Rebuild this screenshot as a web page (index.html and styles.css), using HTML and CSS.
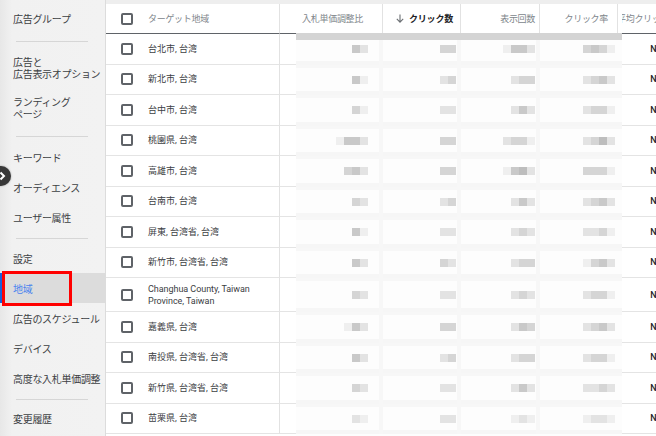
FILE: index.html
```html
<!DOCTYPE html>
<html lang="ja">
<head>
<meta charset="utf-8">
<title>地域</title>
<link rel="stylesheet" href="styles.css">
</head>
<body>
<div class="app">
  <nav class="sidebar">
    <div class="nav-item">広告グループ</div>
    <hr class="nav-div d1">
    <div class="nav-item two"><span class="ln">広告と</span><span class="ln">広告表示オプション</span></div>
    <div class="nav-item two"><span class="ln">ランディング</span><span class="ln">ページ</span></div>
    <hr class="nav-div d2">
    <div class="nav-item">キーワード</div>
    <div class="nav-item">オーディエンス</div>
    <div class="nav-item">ユーザー属性</div>
    <hr class="nav-div d3">
    <div class="nav-item">設定</div>
    <div class="nav-item active">地域</div>
    <div class="nav-item">広告のスケジュール</div>
    <div class="nav-item">デバイス</div>
    <div class="nav-item">高度な入札単価調整</div>
    <hr class="nav-div d4">
    <div class="nav-item">変更履歴</div>
    <div class="highlight"></div>
  </nav>

  <main class="content">
    <div class="top-strip"></div>
    <div class="table">
      <div class="row head">
        <div class="cell name"><span class="cb"></span><span class="h-label">ターゲット地域</span></div>
        <div class="cell num h-bid"><span class="h-label">入札単価調整比</span></div>
        <div class="cell num h-clicks"><svg class="sort" width="8" height="9" viewBox="0 0 8 9"><path d="M4 0.5V8M0.8 4.9L4 8.1 7.2 4.9" fill="none" stroke="#6b6f73" stroke-width="1.1"/></svg><span class="h-strong">クリック数</span></div>
        <div class="cell num h-imp"><span class="h-label">表示回数</span></div>
        <div class="cell num h-ctr"><span class="h-label">クリック率</span></div>
        <div class="cell h-cpc"><div class="clip"><span class="h-label shift">平均クリック単価</span></div></div>
      </div>

      <div class="row"><div class="cell name"><span class="cb"></span><span class="loc">台北市, 台湾</span></div><div class="cell"></div><div class="cell"></div><div class="cell"></div><div class="cell"></div><div class="cell na">N/A</div></div>
      <div class="row"><div class="cell name"><span class="cb"></span><span class="loc">新北市, 台湾</span></div><div class="cell"></div><div class="cell"></div><div class="cell"></div><div class="cell"></div><div class="cell na">N/A</div></div>
      <div class="row"><div class="cell name"><span class="cb"></span><span class="loc">台中市, 台湾</span></div><div class="cell"></div><div class="cell"></div><div class="cell"></div><div class="cell"></div><div class="cell na">N/A</div></div>
      <div class="row"><div class="cell name"><span class="cb"></span><span class="loc">桃園県, 台湾</span></div><div class="cell"></div><div class="cell"></div><div class="cell"></div><div class="cell"></div><div class="cell na">N/A</div></div>
      <div class="row"><div class="cell name"><span class="cb"></span><span class="loc">高雄市, 台湾</span></div><div class="cell"></div><div class="cell"></div><div class="cell"></div><div class="cell"></div><div class="cell na">N/A</div></div>
      <div class="row"><div class="cell name"><span class="cb"></span><span class="loc">台南市, 台湾</span></div><div class="cell"></div><div class="cell"></div><div class="cell"></div><div class="cell"></div><div class="cell na">N/A</div></div>
      <div class="row"><div class="cell name"><span class="cb"></span><span class="loc">屏東, 台湾省, 台湾</span></div><div class="cell"></div><div class="cell"></div><div class="cell"></div><div class="cell"></div><div class="cell na">N/A</div></div>
      <div class="row"><div class="cell name"><span class="cb"></span><span class="loc">新竹市, 台湾省, 台湾</span></div><div class="cell"></div><div class="cell"></div><div class="cell"></div><div class="cell"></div><div class="cell na">N/A</div></div>
      <div class="row tall"><div class="cell name"><span class="cb"></span><span class="loc en">Changhua County, Taiwan<br>Province, Taiwan</span></div><div class="cell"></div><div class="cell"></div><div class="cell"></div><div class="cell"></div><div class="cell na">N/A</div></div>
      <div class="row"><div class="cell name"><span class="cb"></span><span class="loc">嘉義県, 台湾</span></div><div class="cell"></div><div class="cell"></div><div class="cell"></div><div class="cell"></div><div class="cell na">N/A</div></div>
      <div class="row"><div class="cell name"><span class="cb"></span><span class="loc">南投県, 台湾省, 台湾</span></div><div class="cell"></div><div class="cell"></div><div class="cell"></div><div class="cell"></div><div class="cell na">N/A</div></div>
      <div class="row"><div class="cell name"><span class="cb"></span><span class="loc">新竹県, 台湾省, 台湾</span></div><div class="cell"></div><div class="cell"></div><div class="cell"></div><div class="cell"></div><div class="cell na">N/A</div></div>
      <div class="row"><div class="cell name"><span class="cb"></span><span class="loc">苗栗県, 台湾</span></div><div class="cell"></div><div class="cell"></div><div class="cell"></div><div class="cell"></div><div class="cell na">N/A</div></div>
    </div>

    <div class="mask">
      <div class="mrow"><div class="mc bid"><i class="b g2"></i><i class="b g4"></i></div><div class="mc clk"><i class="b g3"></i><i class="b g3"></i></div><div class="mc imp"><i class="b g5"></i><i class="b g2"></i><i class="b g2"></i><i class="b g4"></i></div><div class="mc ctr"><i class="b g3"></i><i class="b g2"></i><i class="b g3"></i><i class="b g5"></i></div></div>
      <div class="mrow"><div class="mc bid"><i class="b g2"></i><i class="b g5"></i></div><div class="mc clk"><i class="b g4"></i><i class="b g3"></i></div><div class="mc imp"><i class="b g4"></i><i class="b g3"></i><i class="b g3"></i></div><div class="mc ctr"><i class="b g4"></i><i class="b g3"></i><i class="b g2"></i><i class="b g4"></i></div></div>
      <div class="mrow"><div class="mc bid"><i class="b g3"></i><i class="b g5"></i></div><div class="mc clk"><i class="b g4"></i><i class="b g4"></i></div><div class="mc imp"><i class="b g4"></i><i class="b g2"></i><i class="b g4"></i></div><div class="mc ctr"><i class="b g4"></i><i class="b g3"></i><i class="b g3"></i><i class="b g5"></i></div></div>
      <div class="mrow"><div class="mc bid"><i class="b g5"></i><i class="b g2"></i><i class="b g2"></i><i class="b g4"></i></div><div class="mc clk"><i class="b g3"></i><i class="b g3"></i></div><div class="mc imp"><i class="b g4"></i><i class="b g3"></i><i class="b g3"></i><i class="b g5"></i></div><div class="mc ctr"><i class="b g4"></i><i class="b g3"></i><i class="b g1"></i><i class="b g4"></i></div></div>
      <div class="mrow"><div class="mc bid"><i class="b g3"></i><i class="b g2"></i><i class="b g4"></i></div><div class="mc clk"><i class="b g3"></i><i class="b g3"></i></div><div class="mc imp"><i class="b g5"></i><i class="b g2"></i><i class="b g1"></i><i class="b g4"></i></div><div class="mc ctr"><i class="b g3"></i><i class="b g3"></i><i class="b g3"></i><i class="b g5"></i></div></div>
      <div class="mrow"><div class="mc bid"><i class="b g3"></i><i class="b g4"></i></div><div class="mc clk"><i class="b g4"></i><i class="b g3"></i></div><div class="mc imp"><i class="b g4"></i><i class="b g2"></i><i class="b g4"></i></div><div class="mc ctr"><i class="b g4"></i><i class="b g3"></i><i class="b g2"></i><i class="b g4"></i></div></div>
      <div class="mrow"><div class="mc bid"><i class="b g2"></i><i class="b g5"></i></div><div class="mc clk"><i class="b g4"></i><i class="b g4"></i></div><div class="mc imp"><i class="b g4"></i><i class="b g3"></i><i class="b g4"></i></div><div class="mc ctr"><i class="b g4"></i><i class="b g4"></i><i class="b g3"></i><i class="b g5"></i></div></div>
      <div class="mrow"><div class="mc bid"><i class="b g2"></i><i class="b g4"></i></div><div class="mc clk"><i class="b g3"></i><i class="b g4"></i></div><div class="mc imp"><i class="b g4"></i><i class="b g3"></i><i class="b g3"></i></div><div class="mc ctr"><i class="b g5"></i><i class="b g3"></i><i class="b g2"></i><i class="b g4"></i></div></div>
      <div class="mrow tall"><div class="mc bid"><i class="b g3"></i><i class="b g4"></i></div><div class="mc clk"><i class="b g4"></i><i class="b g4"></i></div><div class="mc imp"><i class="b g4"></i><i class="b g3"></i><i class="b g4"></i></div><div class="mc ctr"><i class="b g4"></i><i class="b g3"></i><i class="b g3"></i><i class="b g5"></i></div></div>
      <div class="mrow"><div class="mc bid"><i class="b g5"></i><i class="b g2"></i><i class="b g4"></i></div><div class="mc clk"><i class="b g3"></i><i class="b g3"></i></div><div class="mc imp"><i class="b g4"></i><i class="b g2"></i><i class="b g3"></i></div><div class="mc ctr"><i class="b g4"></i><i class="b g3"></i><i class="b g2"></i><i class="b g4"></i></div></div>
      <div class="mrow"><div class="mc bid"><i class="b g2"></i><i class="b g4"></i></div><div class="mc clk"><i class="b g4"></i><i class="b g3"></i></div><div class="mc imp"><i class="b g4"></i><i class="b g3"></i><i class="b g3"></i></div><div class="mc ctr"><i class="b g4"></i><i class="b g3"></i><i class="b g3"></i><i class="b g5"></i></div></div>
      <div class="mrow"><div class="mc bid"><i class="b g3"></i><i class="b g4"></i></div><div class="mc clk"><i class="b g4"></i><i class="b g4"></i></div><div class="mc imp"><i class="b g4"></i><i class="b g2"></i><i class="b g4"></i></div><div class="mc ctr"><i class="b g4"></i><i class="b g4"></i><i class="b g3"></i><i class="b g4"></i></div></div>
      <div class="mrow"><div class="mc bid"><i class="b g4"></i><i class="b g5"></i></div><div class="mc clk"><i class="b g4"></i><i class="b g4"></i></div><div class="mc imp"><i class="b g5"></i><i class="b g4"></i><i class="b g5"></i></div><div class="mc ctr"><i class="b g5"></i><i class="b g4"></i><i class="b g4"></i><i class="b g5"></i></div></div>
    </div>
  </main>

  <button class="collapse" aria-label="展開"><svg width="20" height="20" viewBox="0 0 20 20"><path d="M9.5 6.5L13 10 9.5 13.5" fill="none" stroke="#fff" stroke-width="2"/></svg></button>
</div>
</body>
</html>
```

FILE: styles.css
```css
html, body {
  margin: 0;
  padding: 0;
  background: #ffffff;
}

body {
  font-family: "Noto Sans CJK JP", "Noto Sans", sans-serif;
  color: #3c4043;
  overflow: hidden;
}

.app {
  position: relative;
  display: flex;
  width: 656px;
  height: 436px;
  overflow: hidden;
}

/* ---------- sidebar ---------- */
.sidebar {
  position: relative;
  flex: 0 0 106px;
  box-sizing: border-box;
  height: 436px;
  padding-top: 3px;
  background: linear-gradient(to right, #e7e7e7 0, #f1f1f1 12px, #f2f2f2 100%);
  border-right: 1px solid #dcdcdc;
  display: flex;
  flex-direction: column;
}

.nav-item {
  height: 30px;
  flex: 0 0 auto;
  display: flex;
  align-items: center;
  padding-left: 13px;
  font-size: 10px;
  letter-spacing: -0.3px;
  line-height: 13px;
  color: #3c4043;
  white-space: nowrap;
}

.nav-item.two {
  height: 40px;
  flex-direction: column;
  align-items: flex-start;
  justify-content: center;
}

.ln {
  display: block;
  height: 12.5px;
  line-height: 12.5px;
}

.nav-item.active {
  background: #dcdcdc;
  color: #4a84ee;
  box-shadow: inset 3px 0 0 #1a5fd8;
}

.nav-div {
  flex: 0 0 auto;
  height: 1px;
  border: 0;
  background: #d6d6d6;
  margin: 0 17px 0 16px;
}

.nav-div.d1 { margin-top: 8px; margin-bottom: 6px; }
.nav-div.d2 { margin-top: 8px; margin-bottom: 5px; }
.nav-div.d3 { margin-top: 6px; margin-bottom: 4px; }
.nav-div.d4 { margin-top: 6px; margin-bottom: 3px; }

.highlight {
  position: absolute;
  left: 2px;
  top: 271px;
  width: 70px;
  height: 35px;
  box-sizing: border-box;
  border: 3px solid #ff0000;
}

.collapse {
  position: absolute;
  left: -9px;
  top: 166px;
  width: 20px;
  height: 20px;
  padding: 0;
  border: 0;
  border-radius: 50%;
  background: #383838;
  box-shadow: 0 0 2px rgba(0, 0, 0, 0.35);
}

.collapse svg {
  display: block;
}

/* ---------- table ---------- */
.content {
  position: relative;
  flex: 1 1 auto;
  height: 436px;
  overflow: hidden;
  background: #ffffff;
}

.top-strip {
  height: 4px;
  background: #eeeeee;
}

.table {
  font-family: Roboto, "Noto Sans CJK JP", sans-serif;
  font-size: 9px;
}

.row {
  display: grid;
  grid-template-columns: 174px 103px 78px 79px 78px 60px;
  height: 30.5px;
}

.row.tall {
  height: 34px;
}

.row.head {
  height: 30px;
}

.cell {
  box-sizing: border-box;
  display: flex;
  align-items: center;
  border-bottom: 1px solid #e4e4e4;
  min-width: 0;
}

.head .cell {
  border-bottom: 1px solid #5f6368;
  border-right: 1px solid #e2e2e2;
}

.name {
  border-right: 1px solid #e2e2e2;
  padding-left: 15px;
  gap: 15px;
}

.cb {
  flex: 0 0 12px;
  width: 12px;
  height: 12px;
  box-sizing: border-box;
  border: 2px solid #5f6368;
  border-radius: 2px;
}

.h-label {
  font-family: "Noto Sans CJK JP", sans-serif;
  color: #80868b;
  letter-spacing: -0.3px;
  white-space: nowrap;
}

.h-strong {
  font-family: "Noto Sans CJK JP", sans-serif;
  font-weight: 700;
  color: #202124;
  letter-spacing: -0.2px;
  white-space: nowrap;
}

.num {
  justify-content: flex-end;
}

.h-bid { padding-right: 19px; }
.h-clicks { padding-right: 7px; gap: 5px; }
.h-imp { padding-right: 4px; }
.h-ctr { padding-right: 9px; }

.sort {
  display: block;
}

.h-cpc {
  padding-left: 0;
}

.clip {
  margin-left: 4px;
  overflow: hidden;
  white-space: nowrap;
}

.shift {
  display: inline-block;
  margin-left: -5px;
}

.loc {
  color: #3c4043;
  white-space: nowrap;
  line-height: 12px;
}

.loc.en {
  letter-spacing: -0.05px;
}

.na {
  justify-content: flex-end;
  padding-right: 12px;
  color: #202124;
  font-weight: 500;
  font-family: Roboto, sans-serif;
}

/* ---------- blurred data mask ---------- */
.mask {
  position: absolute;
  left: 190px;
  top: 33px;
  width: 326px;
  bottom: 0;
  padding-top: 1px;
  box-sizing: border-box;
  background: #fdfdfd;
}

.mask::before {
  content: "";
  position: absolute;
  left: 0;
  right: 0;
  top: 0;
  height: 7px;
  background: #d4d4d4;
}

.mrow {
  display: grid;
  grid-template-columns: 87px 78px 79px 82px;
  height: 30.5px;
  background: linear-gradient(to bottom, #f7f7f7 0, #f7f7f7 3px, #fdfdfd 3px, #fdfdfd calc(100% - 4px), #f6f6f6 calc(100% - 4px));
}

.mrow.tall {
  height: 34px;
}

.mc {
  box-sizing: border-box;
  display: flex;
  align-items: center;
  justify-content: flex-end;
}

.mc.bid { padding-right: 11px; border-right: 4px solid #f7f7f7; }
.mc.clk { padding-right: 1px; border-right: 4px solid #f7f7f7; }
.mc.imp { padding-right: 1px; border-right: 4px solid #f7f7f7; }
.mc.ctr { padding-right: 7px; }

.b {
  display: block;
  width: 8px;
  height: 8px;
}

.g1 { background: #bdbdbd; }
.g2 { background: #c9c9c9; }
.g3 { background: #d5d5d5; }
.g4 { background: #e3e3e3; }
.g5 { background: #efefef; }
```
